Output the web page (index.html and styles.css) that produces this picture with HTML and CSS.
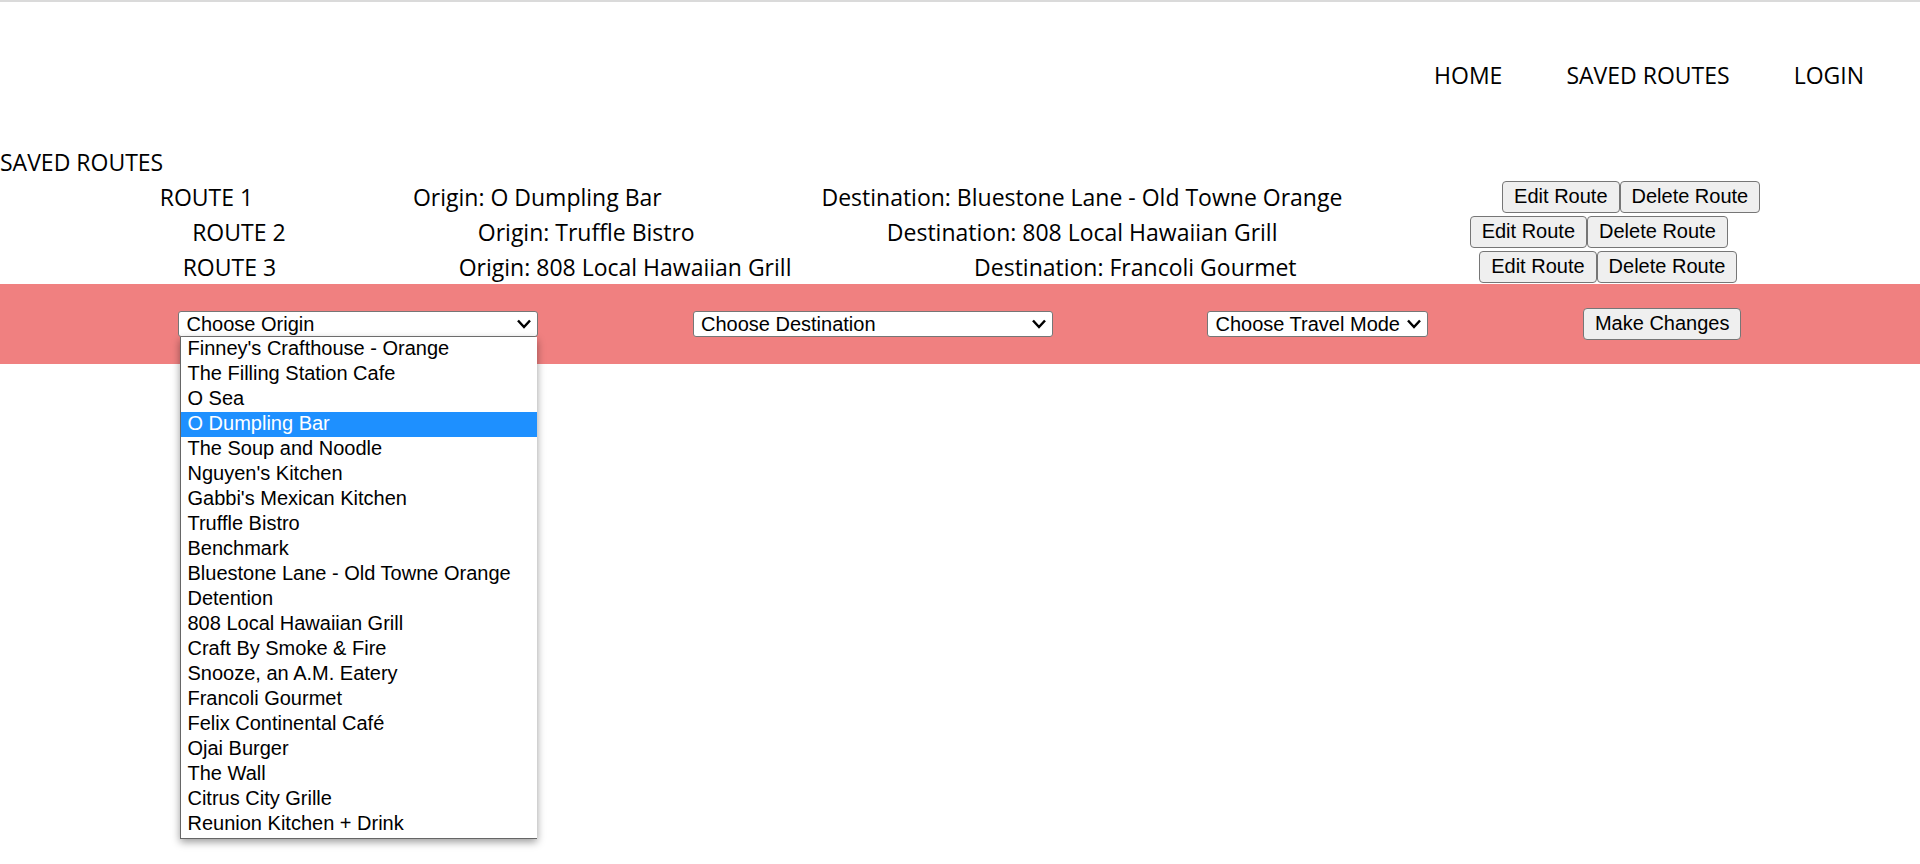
FILE: index.html
```html
<!DOCTYPE html>
<html lang="en">
<head>
<meta charset="utf-8">
<meta name="viewport" content="width=device-width, initial-scale=1">
<title>Saved Routes</title>
<link rel="stylesheet" href="styles.css">
</head>
<body>
<header class="header">
  <nav class="nav">
    <a class="nav-link" href="#home">HOME</a>
    <a class="nav-link" href="#saved">SAVED ROUTES</a>
    <a class="nav-link" href="#login">LOGIN</a>
  </nav>
</header>
<main>
  <section class="routes">
    <h1 class="title">SAVED ROUTES</h1>
    <div class="route">
      <span>ROUTE 1</span>
      <span>Origin: O Dumpling Bar</span>
      <span>Destination: Bluestone Lane - Old Towne Orange</span>
      <div class="actions"><button class="button" type="button">Edit Route</button><button class="button" type="button">Delete Route</button></div>
    </div>
    <div class="route">
      <span>ROUTE 2</span>
      <span>Origin: Truffle Bistro</span>
      <span>Destination: 808 Local Hawaiian Grill</span>
      <div class="actions"><button class="button" type="button">Edit Route</button><button class="button" type="button">Delete Route</button></div>
    </div>
    <div class="route">
      <span>ROUTE 3</span>
      <span>Origin: 808 Local Hawaiian Grill</span>
      <span>Destination: Francoli Gourmet</span>
      <div class="actions"><button class="button" type="button">Edit Route</button><button class="button" type="button">Delete Route</button></div>
    </div>
  </section>
  <form class="editor">
    <div class="picker">
      <select class="select" aria-label="Origin">
        <option>Choose Origin</option>
        <option>Bluestone Lane - Old Towne Orange</option>
      </select>
      <svg class="chevron" viewBox="0 0 14 10" aria-hidden="true"><path d="M1 1.5 7 8 13 1.5"/></svg>
      <ul class="menu" role="listbox" aria-label="Origin choices">
        <li class="option" role="option">Finney's Crafthouse - Orange</li>
        <li class="option" role="option">The Filling Station Cafe</li>
        <li class="option" role="option">O Sea</li>
        <li class="option option-active" role="option" aria-selected="true">O Dumpling Bar</li>
        <li class="option" role="option">The Soup and Noodle</li>
        <li class="option" role="option">Nguyen's Kitchen</li>
        <li class="option" role="option">Gabbi's Mexican Kitchen</li>
        <li class="option" role="option">Truffle Bistro</li>
        <li class="option" role="option">Benchmark</li>
        <li class="option" role="option">Bluestone Lane - Old Towne Orange</li>
        <li class="option" role="option">Detention</li>
        <li class="option" role="option">808 Local Hawaiian Grill</li>
        <li class="option" role="option">Craft By Smoke &amp; Fire</li>
        <li class="option" role="option">Snooze, an A.M. Eatery</li>
        <li class="option" role="option">Francoli Gourmet</li>
        <li class="option" role="option">Felix Continental Café</li>
        <li class="option" role="option">Ojai Burger</li>
        <li class="option" role="option">The Wall</li>
        <li class="option" role="option">Citrus City Grille</li>
        <li class="option" role="option">Reunion Kitchen + Drink</li>
      </ul>
    </div>
    <div class="picker">
      <select class="select" aria-label="Destination">
        <option>Choose Destination</option>
        <option>Bluestone Lane - Old Towne Orange</option>
      </select>
      <svg class="chevron" viewBox="0 0 14 10" aria-hidden="true"><path d="M1 1.5 7 8 13 1.5"/></svg>
    </div>
    <div class="picker">
      <select class="select" aria-label="Travel mode">
        <option>Choose Travel Mode</option>
      </select>
      <svg class="chevron" viewBox="0 0 14 10" aria-hidden="true"><path d="M1 1.5 7 8 13 1.5"/></svg>
    </div>
    <button class="button" type="button">Make Changes</button>
  </form>
</main>
</body>
</html>
```
FILE: styles.css
```css
* {
  box-sizing: border-box;
}

body {
  min-height: 100vh;
  margin: 0;
  background: #fff;
  color: #000;
  font: 23px/32px "Open Sans", "Noto Sans", sans-serif;
}

.header {
  padding: 57px 56px 55px;
  border-top: 2px solid #dadada;
}

.nav {
  display: flex;
  justify-content: flex-end;
  gap: 64px;
}

.nav-link {
  color: inherit;
  text-decoration: none;
}

.routes {
  display: flex;
  flex-direction: column;
  gap: 3px;
  padding-bottom: 1px;
}

.title {
  margin: 0;
  font-size: inherit;
  font-weight: 400;
}

.route {
  display: flex;
  justify-content: space-evenly;
  align-items: center;
}

.actions {
  display: flex;
}

.button {
  height: 32px;
  padding: 0 11px 2px;
  border: 1px solid #767676;
  border-radius: 4px;
  background: #efefef;
  color: #000;
  font: 20px/23px "Liberation Sans", Arial, sans-serif;
}

.editor {
  display: flex;
  justify-content: space-evenly;
  align-items: center;
  padding: 24px;
  background: #f08080;
}

.picker {
  position: relative;
  display: grid;
  align-items: center;
}

.select {
  grid-area: 1 / 1;
  appearance: none;
  height: 26px;
  padding: 0 27px 0 7px;
  border: 1px solid #767676;
  border-radius: 3px;
  background: #fff;
  color: #000;
  font: 20px/24px "Liberation Sans", Arial, sans-serif;
}

.chevron {
  grid-area: 1 / 1;
  justify-self: end;
  width: 14px;
  height: 10px;
  margin-right: 7px;
  fill: none;
  stroke: #000;
  stroke-width: 2.5;
  pointer-events: none;
}

.menu {
  position: absolute;
  top: 100%;
  left: 2px;
  right: 1px;
  margin: 0;
  padding: 0 0 1px;
  border: solid #666;
  border-width: 0 0 1px 1px;
  background: #fff;
  box-shadow: 0 3px 8px rgba(0, 0, 0, 0.4);
  font: 20px/23px "Liberation Sans", Arial, sans-serif;
  list-style: none;
}

.option {
  padding: 0 6px 2px;
}

.option-active {
  background: #1e90ff;
  color: #fff;
}
```
